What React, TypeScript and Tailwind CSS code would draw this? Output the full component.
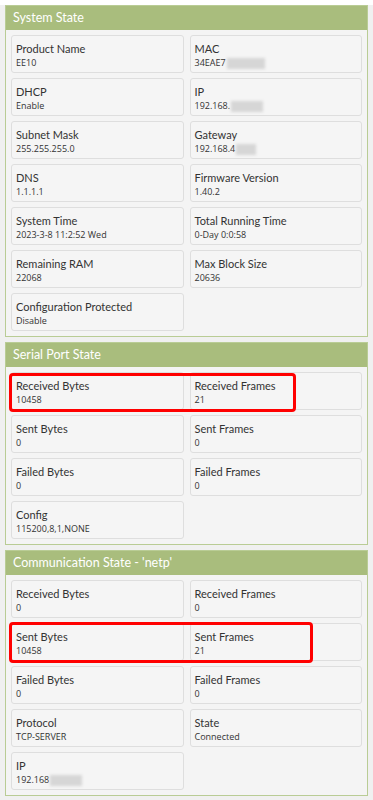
type Item = { label: string; value: string; blur?: number };

const systemItems: Item[] = [
  { label: "Product Name", value: "EE10" },
  { label: "MAC", value: "34EAE7", blur: 38 },
  { label: "DHCP", value: "Enable" },
  { label: "IP", value: "192.168.", blur: 32 },
  { label: "Subnet Mask", value: "255.255.255.0" },
  { label: "Gateway", value: "192.168.4", blur: 20 },
  { label: "DNS", value: "1.1.1.1" },
  { label: "Firmware Version", value: "1.40.2" },
  { label: "System Time", value: "2023-3-8 11:2:52 Wed" },
  { label: "Total Running Time", value: "0-Day 0:0:58" },
  { label: "Remaining RAM", value: "22068" },
  { label: "Max Block Size", value: "20636" },
  { label: "Configuration Protected", value: "Disable" },
];

const serialItems: Item[] = [
  { label: "Received Bytes", value: "10458" },
  { label: "Received Frames", value: "21" },
  { label: "Sent Bytes", value: "0" },
  { label: "Sent Frames", value: "0" },
  { label: "Failed Bytes", value: "0" },
  { label: "Failed Frames", value: "0" },
  { label: "Config", value: "115200,8,1,NONE" },
];

const commItems: Item[] = [
  { label: "Received Bytes", value: "0" },
  { label: "Received Frames", value: "0" },
  { label: "Sent Bytes", value: "10458" },
  { label: "Sent Frames", value: "21" },
  { label: "Failed Bytes", value: "0" },
  { label: "Failed Frames", value: "0" },
  { label: "Protocol", value: "TCP-SERVER" },
  { label: "State", value: "Connected" },
  { label: "IP", value: "192.168", blur: 32 },
];

function InfoCard({ item }: { item: Item }) {
  return (
    <div className="h-[38px] rounded-[3px] border border-[#dedede] bg-[#f5f5f5] pl-[4px] pt-[5px]">
      <div className="font-['Lato'] text-[11px] leading-[16px] text-[#333]">{item.label}</div>
      <div className="flex items-center text-[9px] leading-[12px] text-[#333]">
        <span>{item.value}</span>
        {item.blur ? (
          <span
            className="ml-[1px] inline-block h-[11px] bg-[#d6d6d6] blur-[1.5px]"
            style={{ width: item.blur }}
          />
        ) : null}
      </div>
    </div>
  );
}

function Panel({
  title,
  items,
  highlight,
}: {
  title: string;
  items: Item[];
  highlight?: { top: number; width: number; height: number };
}) {
  return (
    <div className="relative mx-[5px] mt-[5px] border border-[#b9cc95] bg-[#f4f4f4]">
      <div className="flex h-[24px] items-center bg-[#a9bd7d] pl-[7px] font-['Lato'] text-[12.5px] text-white">
        {title}
      </div>
      <div className="grid grid-cols-2 gap-x-[6px] gap-y-[5px] p-[5px]">
        {items.map((it, i) => (
          <InfoCard key={i} item={it} />
        ))}
      </div>
      {highlight ? (
        <div
          className="absolute left-[3px] rounded-[4px] border-[3px] border-[#ff0000]"
          style={{ top: highlight.top, width: highlight.width, height: highlight.height }}
        />
      ) : null}
    </div>
  );
}

export default function App() {
  return (
    <div
      className="min-h-[800px] w-[373px] bg-[#f0f0f0] pb-[4px]"
      style={{ fontFamily: '"Open Sans", "Noto Sans", sans-serif' }}
    >
      <Panel title="System State" items={systemItems} />
      <Panel
        title="Serial Port State"
        items={serialItems}
        highlight={{ top: 30, width: 287, height: 39 }}
      />
      <Panel
        title="Communication State - 'netp'"
        items={commItems}
        highlight={{ top: 71, width: 304, height: 41 }}
      />
    </div>
  );
}
